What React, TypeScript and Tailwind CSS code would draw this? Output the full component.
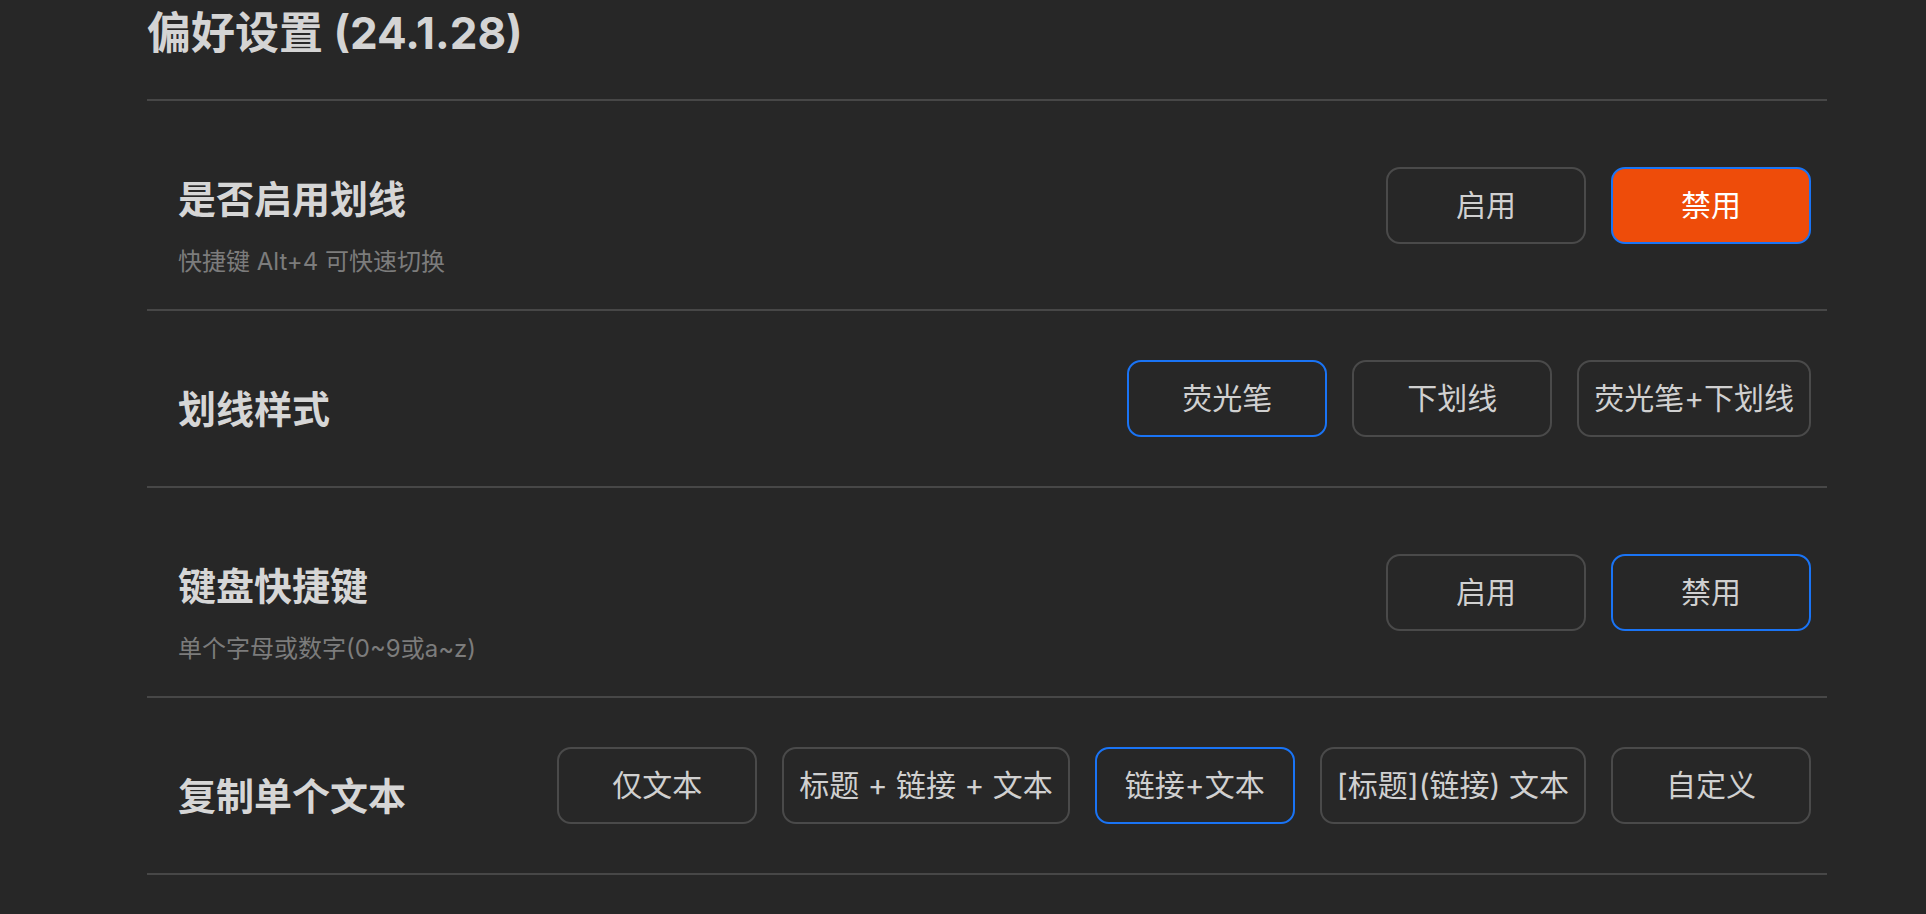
import React, { useState } from 'react';

type Row = {
  title: string;
  hint?: string;
  options: string[];
  selected: number;
  filled?: boolean;
};

const rows: Row[] = [
  { title: '是否启用划线', hint: '快捷键 Alt+4 可快速切换', options: ['启用', '禁用'], selected: 1, filled: true },
  { title: '划线样式', options: ['荧光笔', '下划线', '荧光笔+下划线'], selected: 0 },
  { title: '键盘快捷键', hint: '单个字母或数字(0~9或a~z)', options: ['启用', '禁用'], selected: 1 },
  {
    title: '复制单个文本',
    options: ['仅文本', '标题 + 链接 + 文本', '链接+文本', '[标题](链接) 文本', '自定义'],
    selected: 2,
  },
];

const font = { fontFamily: 'Inter, "Noto Sans CJK SC", sans-serif' };

const SettingRow = ({ row }: { row: Row }) => {
  const [selected, setSelected] = useState(row.selected);

  return (
    <div className="flex items-center justify-between border-b-2 border-[#474747] pl-[31px] pr-[16px]">
      <div className={row.hint ? 'pt-[79px] pb-[35px]' : 'pt-[79px] pb-[58px]'}>
        <div className="text-[38px] leading-[38px] font-bold text-[#d6d6d6]">{row.title}</div>
        {row.hint && (
          <div className="mt-[32px] text-[24px] leading-[24px] text-[#7c7c7c]">{row.hint}</div>
        )}
      </div>
      <div className="flex gap-[25px]">
        {row.options.map((opt, i) => {
          const active = i === selected;
          let cls = 'border-[#4a4a4a] text-[#d0d0d0]';
          if (active && row.filled) cls = 'border-[#1a74f5] bg-[#ee4c0a] text-white';
          else if (active) cls = 'border-[#1a74f5] text-[#d0d0d0]';
          return (
            <button
              key={opt}
              onClick={() => setSelected(i)}
              className={`h-[77px] min-w-[200px] px-[15px] rounded-[14px] border-2 text-[30px] whitespace-nowrap ${cls}`}
              style={font}
            >
              {opt}
            </button>
          );
        })}
      </div>
    </div>
  );
};

export default function App() {
  return (
    <div className="min-h-screen bg-[#272727]" style={font}>
      <div className="ml-[147px] w-[1680px]">
        <div className="pt-[11px] pb-[44px] border-b-2 border-[#474747]">
          <h1 className="text-[44px] leading-[44px] font-bold text-[#d4d4d4]">偏好设置 (24.1.28)</h1>
        </div>
        {rows.map((row) => (
          <SettingRow key={row.title} row={row} />
        ))}
      </div>
    </div>
  );
}
